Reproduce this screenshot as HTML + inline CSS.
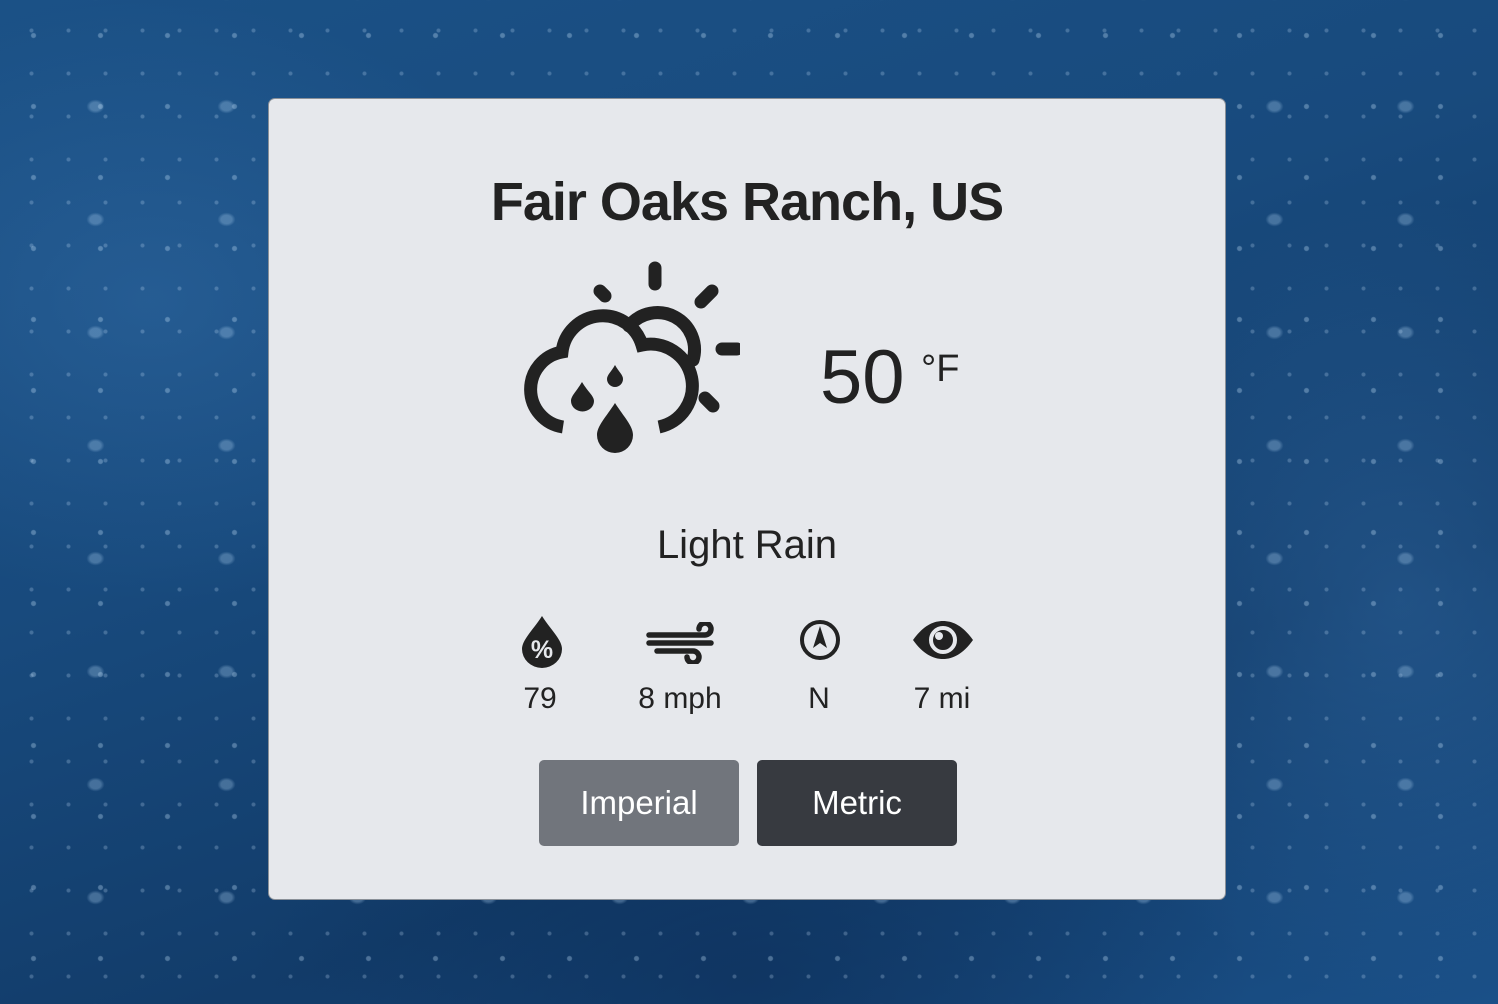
<!DOCTYPE html>
<html><head><meta charset="utf-8"><style>
html,body{margin:0;width:1498px;height:1004px;overflow:hidden}
body{position:relative;font-family:"Liberation Sans","DejaVu Sans",sans-serif;
background:
radial-gradient(ellipse 400px 300px at 150px 300px,rgba(60,120,180,.35),transparent),
radial-gradient(ellipse 350px 400px at 1400px 600px,rgba(60,120,180,.35),transparent),
radial-gradient(ellipse 500px 300px at 750px 980px,rgba(10,40,80,.5),transparent),
linear-gradient(160deg,#1b5186 0%,#184a7d 40%,#123c6a 70%,#1a5088 100%);}
.dots{position:absolute;inset:0;background-image:
radial-gradient(circle at 50% 50%,rgba(190,220,245,.35) 0 2px,transparent 3px),
radial-gradient(ellipse 9px 7px at 50% 50%,rgba(180,215,245,.3) 0 60%,transparent 100%),
radial-gradient(circle at 50% 50%,rgba(200,225,250,.25) 0 1.5px,transparent 2.5px);
background-size:67px 71px,131px 113px,37px 43px;background-position:0 0,30px 50px,13px 9px}
.card{position:absolute;left:268px;top:98px;width:958px;height:802px;background:#e6e8ec;border:1px solid #8a9098;border-radius:7px;box-sizing:border-box;text-align:center;color:#222;line-height:1}
.card div,.card h1{line-height:1}
h1{position:absolute;left:0;right:0;top:76px;margin:0;font-size:54px;font-weight:bold;letter-spacing:-1px;color:#222}
.temp{position:absolute;left:551px;top:241px;font-size:76px;color:#222}
.unit{position:absolute;left:652px;top:251px;font-size:38px;color:#222}
.desc{position:absolute;left:0;right:0;top:426px;font-size:40px;color:#222}
.st{position:absolute;top:585px;font-size:30px;color:#222;text-align:center;width:120px}
.btn{position:absolute;top:661px;width:200px;height:86px;border-radius:5px;color:#fff;font-size:33px;line-height:86px!important}
</style></head><body><div class="dots"></div>
<div class="card">
<h1>Fair Oaks Ranch, US</h1>
<svg style="position:absolute;left:231px;top:159px" width="240" height="200" viewBox="500 258 240 200">
<g fill="none" stroke="#222" stroke-width="13" stroke-linecap="round">
<path d="M655 268v16M600 291l5 5M712 291l-11 11M722 349h15M705 398l8 8"/>
<path d="M629 326a37 37 0 0 1 64 34"/>
<path d="M563 427A38 38 0 0 1 562 352A41 41 0 0 1 642 345A41 41 0 0 1 659 427" stroke-linecap="butt"/>
</g>
<g fill="#222"><path d="M615 403c-9 14-18 23-18 32a18 18 0 0 0 36 0c0-9-9-18-18-32z"/>
<path d="M582 382c-6 10-11 14-11 19a11 10 0 0 0 23 0c0-5-6-9-12-19z"/>
<path d="M615 365c-4 7-8 10-8 14a8 8 0 0 0 16 0c0-4-4-7-8-14z"/></g>
</svg>
<div class="temp">50</div><div class="unit">°F</div>
<div class="desc">Light Rain</div>
<svg style="position:absolute;left:251px;top:515px" width="44" height="54" viewBox="0 0 44 54"><path d="M22 2C13 16 2 26 2 35a20 19 0 0 0 40 0C42 26 31 16 22 2z" fill="#222"/><text x="22" y="44" font-size="25" font-weight="bold" fill="#e6e8ec" text-anchor="middle" font-family="Liberation Sans">%</text></svg>
<svg style="position:absolute;left:376px;top:523px" width="72" height="42" viewBox="0 0 72 42"><g fill="none" stroke="#222" stroke-width="5.5" stroke-linecap="round"><path d="M4 13h56a6 6 0 1 0-6-6"/><path d="M4 21h62"/><path d="M12 29h36a6 6 0 1 1-6 6"/></g></svg>
<svg style="position:absolute;left:529px;top:519px" width="44" height="44" viewBox="0 0 44 44"><circle cx="22" cy="22" r="18" fill="none" stroke="#222" stroke-width="4"/><path d="M22 8l7 22-7-5-7 5z" fill="#222"/></svg>
<svg style="position:absolute;left:643px;top:521px" width="62" height="40" viewBox="0 0 62 40"><path d="M1 20C11 6 21 1 31 1s20 5 30 19c-10 14-20 19-30 19S11 34 1 20z" fill="#222"/><circle cx="31" cy="20" r="12" fill="none" stroke="#e6e8ec" stroke-width="4"/><circle cx="27" cy="16" r="4" fill="#e6e8ec"/></svg>
<div class="st" style="left:211px">79</div>
<div class="st" style="left:351px">8 mph</div>
<div class="st" style="left:490px">N</div>
<div class="st" style="left:613px">7 mi</div>
<div class="btn" style="left:270px;background:#71757c">Imperial</div>
<div class="btn" style="left:488px;background:#373a40">Metric</div>
</div>
</body></html>
